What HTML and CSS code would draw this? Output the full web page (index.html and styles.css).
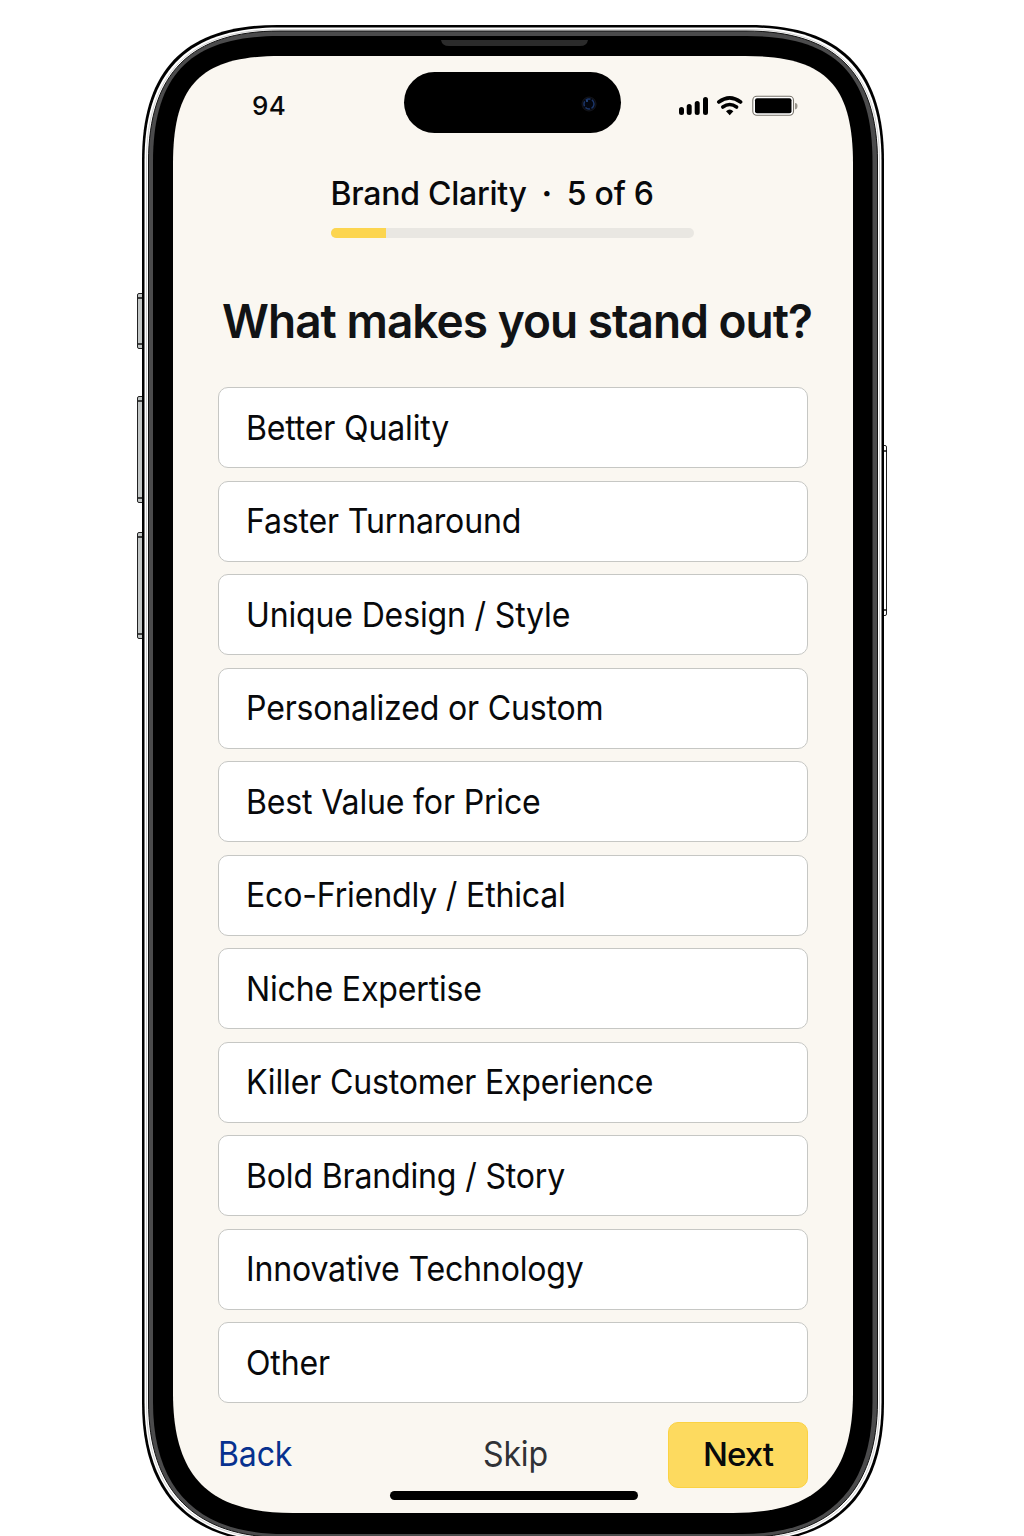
FILE: index.html
```html
<!DOCTYPE html>
<html lang="en">
<head>
<meta charset="utf-8">
<title>Brand Clarity</title>
<link rel="stylesheet" href="styles.css">
</head>
<body>
<div class="stage">
  <svg class="device" viewBox="0 0 1024 1536" aria-hidden="true">
    <g fill="#c3c7c6" stroke="#222" stroke-width="1">
      <rect x="137.500" y="293.500" width="7" height="55" rx="1.500"/>
      <rect x="137.500" y="396.500" width="7" height="106" rx="1.500"/>
      <rect x="137.500" y="532.500" width="7" height="106" rx="1.500"/>
      <rect x="881.500" y="445.500" width="5" height="170" rx="1.500" fill="#fff"/>
    </g>
    <path d="M138 298h5M138 344h5M138 401h5M138 498h5M138 537h5M138 634h5M884 451h3M884 610h3" stroke="#111" stroke-width="1.500"/>
    <path fill="#000" d="M142 160C142 69 186 25 277 25H749C840 25 884 69 884 160V1403C884 1495 836 1543 744 1543H282C190 1543 142 1495 142 1403Z"/>
    <path fill="#fff" d="M144.500 161C144.500 71 188 27.500 278 27.500H748C838 27.500 881.500 71 881.500 161V1402C881.500 1493 834 1541 743 1541H283C192 1541 144.500 1493 144.500 1402Z"/>
    <path fill="none" stroke="#c4c4c4" stroke-width=".8" d="M146.500 162C146.500 73 190 29.500 279 29.500H747C836 29.500 879.500 73 879.500 162V1402C879.500 1492 833 1539 743 1539H283C193 1539 146.500 1492 146.500 1402Z"/>
    <path fill="#4b4b4c" stroke="#111" stroke-width="1" d="M148.500 162C148.500 73 191 31 280 31H746C835 31 877.500 73 877.500 162V1401C877.500 1491 831 1537.500 742 1537.500H284C195 1537.500 148.500 1491 148.500 1401Z"/>
    <path fill="#000" d="M153 162C153 74 191 36 279 36H747C835 36 872.500 74 872.500 162V1402C872.500 1490 828 1534 742 1534H284C198 1534 153 1490 153 1402Z"/>
    <path fill="#faf7f1" d="M173 164C173 84 201 56 281 56H745C825 56 853 84 853 164V1393C853 1477 817 1513 733 1513H293C209 1513 173 1477 173 1393Z"/>
    <path fill="#2b2b2b" d="M441 40H588Q587 46 580 46H449Q442 46 441 40Z"/>
  </svg>

  <main class="screen">
    <header class="status">
      <span class="time">94</span>
      <span class="island"><svg width="18" height="18" viewBox="0 0 18 18"><circle cx="9" cy="9" r="7" fill="#080a10" stroke="#14151b"/><circle cx="9" cy="9" r="5" fill="#03060e" stroke="#1b3568" stroke-width="1.500" stroke-dasharray="5 1.500"/><circle cx="7" cy="6" r="1" fill="#294f91"/></svg></span>
      <svg class="indicators" width="120" height="24" viewBox="678 94 120 24">
        <path d="M681.500 109.500V112.500M689.200 106.500V112.500M697.200 103.500V112.500M705.500 99.500V112.500" stroke="#000" stroke-width="5" stroke-linecap="round"/>
        <g fill="none" stroke="#000" stroke-width="3.600" stroke-linecap="round">
          <path d="M718.800 102Q729.700 93.800 740.600 102"/>
          <path d="M722.800 107Q729.700 102 736.600 107"/>
        </g>
        <path d="M726 111.300Q729.700 107.700 733.400 111.300L729.700 115.200Z"/>
        <rect x="752.800" y="96.300" width="40.700" height="19" rx="4" fill="#fff" stroke="#77736b" stroke-width="1.100"/>
        <rect x="755" y="98.300" width="36.500" height="15" rx="2"/>
        <path d="M795 103Q797.500 103 797.500 106T795 109.500Z" fill="#99958c"/>
      </svg>
    </header>

    <section class="progress">
      <p class="step"><span>Brand Clarity</span><span class="dot">·</span><span>5 of 6</span></p>
      <div class="track"><div class="fill"></div></div>
    </section>

    <h1 class="title">What makes you stand out?</h1>

    <ul class="options">
      <li class="option"><span class="label">Better Quality</span></li>
      <li class="option"><span class="label">Faster Turnaround</span></li>
      <li class="option"><span class="label">Unique Design / Style</span></li>
      <li class="option"><span class="label">Personalized or Custom</span></li>
      <li class="option"><span class="label">Best Value for Price</span></li>
      <li class="option"><span class="label">Eco-Friendly / Ethical</span></li>
      <li class="option"><span class="label">Niche Expertise</span></li>
      <li class="option"><span class="label">Killer Customer Experience</span></li>
      <li class="option"><span class="label">Bold Branding / Story</span></li>
      <li class="option"><span class="label">Innovative Technology</span></li>
      <li class="option"><span class="label">Other</span></li>
    </ul>

    <footer class="actions">
      <a class="back"><span class="label">Back</span></a>
      <a class="skip"><span class="label">Skip</span></a>
      <a class="next">Next</a>
    </footer>
    <div class="home"></div>
  </main>
</div>
</body>
</html>
```

FILE: styles.css
```css
* { box-sizing: border-box; }

body {
  margin: 0;
  background: #fff;
  color: #08090b;
  font-family: Inter, "Liberation Sans", sans-serif;
}

.stage {
  position: relative;
  width: 1024px;
  height: 1536px;
  overflow: hidden;
}

.device {
  position: absolute;
  inset: 0;
  width: 1024px;
  height: 1536px;
}

.screen {
  position: relative;
  width: 680px;
  margin: 56px 0 0 173px;
  padding: 16px 45px 0;
  display: flex;
  flex-direction: column;
}

.status {
  height: 61px;
  display: grid;
  grid-template-columns: 186px 217px 1fr;
  align-items: center;
}

.time {
  padding: 6px 0 0 34px;
  font-size: 26px;
  font-weight: 550;
  letter-spacing: .3px;
  line-height: 32px;
}

.island {
  height: 61px;
  display: flex;
  align-items: center;
  justify-content: flex-end;
  padding: 3px 23px 0 0;
  border-radius: 31px;
  background: #000;
}

.indicators { margin: 6px 0 0 57px; }

.progress { padding: 41px 0 0 113px; }

.step {
  display: flex;
  margin: 0 0 0 -.5px;
  font-size: 32px;
  font-weight: 530;
  line-height: 40px;
  letter-spacing: -.25px;
  white-space: nowrap;
}

.dot {
  width: 40px;
  font-weight: 700;
  text-align: center;
}

.track {
  width: 363px;
  height: 10px;
  margin-top: 14px;
  border-radius: 5px;
  background: #e9e7e2;
  overflow: hidden;
}

.fill {
  width: 55px;
  height: 10px;
  background: #fcd54f;
}

.title {
  margin: 53px 0 0 4px;
  color: #111315;
  font-size: 47px;
  font-weight: 560;
  line-height: 60px;
  letter-spacing: -1px;
  white-space: nowrap;
  transform: scaleX(.979);
  transform-origin: 0 50%;
}

.options {
  display: flex;
  flex-direction: column;
  gap: 12.5px;
  margin: 36px 0 0;
  padding: 0;
  list-style: none;
}

.option {
  width: 590px;
  height: 81px;
  display: flex;
  align-items: center;
  padding: 0 0 0 26.5px;
  border: 1.500px solid #c6c7c4;
  border-radius: 10px;
  background: #fff;
  white-space: nowrap;
}

.label {
  display: inline-block;
  font-size: 34.5px;
  line-height: 40px;
  letter-spacing: -.2px;
  transform: scaleX(.93);
  transform-origin: 0 50%;
}

.actions {
  width: 590px;
  height: 66px;
  display: grid;
  grid-template-columns: 265px 185px 140px;
  align-items: center;
  margin-top: 18.5px;
}

.back,
.skip { padding-bottom: 2px; }

.back { color: #07318f; }
.skip { color: #303236; }

.next {
  height: 66px;
  display: flex;
  align-items: center;
  justify-content: center;
  padding-bottom: 2px;
  border: 1px solid #fbd243;
  border-radius: 10px;
  background: #fdda5f;
  color: #08090b;
  font-size: 33px;
  font-weight: 550;
  letter-spacing: -1px;
  line-height: 40px;
}

.home {
  width: 248px;
  height: 9px;
  margin: 3px 0 0 171.5px;
  border-radius: 5px;
  background: #000;
}
```
